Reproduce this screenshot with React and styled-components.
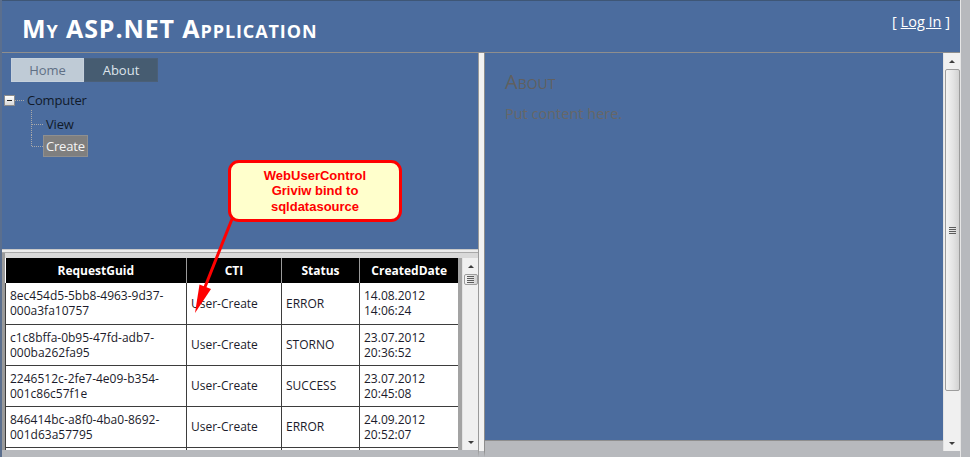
import styled, { createGlobalStyle } from "styled-components";

const GlobalStyle = createGlobalStyle`
  html, body {
    margin: 0;
    padding: 0;
    background: #b7b9bd;
  }
  body {
    font-family: "Open Sans", "DejaVu Sans", sans-serif;
  }
  * {
    box-sizing: border-box;
  }
`;

const Frame = styled.div`
  position: relative;
  width: 970px;
  height: 457px;
  display: flex;
  background: #b7b9bd;
  overflow: hidden;
`;

const Page = styled.div`
  width: 961px;
  height: 100%;
  display: flex;
  flex-direction: column;
  border-left: 2px solid #5b6f8e;
  border-right: 1px solid #e6e6e6;
  background: #b7b9bd;
`;

const Header = styled.header`
  height: 52px;
  flex-shrink: 0;
  display: flex;
  justify-content: space-between;
  align-items: flex-start;
  background: #4b6c9e;
  border-top: 1px solid #3e5676;
  padding: 0 10px 0 20px;
`;

const Title = styled.h1`
  margin: 10px 0 0;
  font-size: 25px;
  font-weight: 700;
  font-variant: small-caps;
  letter-spacing: 0.9px;
  color: #ffffff;
`;

const Login = styled.div`
  margin-top: 11px;
  font-size: 14.5px;
  color: #ffffff;

  a {
    color: #ffffff;
    text-decoration: underline;
  }
`;

const Body = styled.div`
  flex: 1;
  display: flex;
  border-top: 1px solid #8e8e8e;
  min-height: 0;
`;

const LeftPane = styled.div`
  position: relative;
  width: 476px;
  display: flex;
  flex-direction: column;
`;

const NavArea = styled.div`
  height: 196px;
  background: #4b6c9e;
  padding: 5px 0 0 9px;
`;

const Menu = styled.ul`
  list-style: none;
  display: flex;
  margin: 0;
  padding: 0;
`;

const MenuItem = styled.li`
  width: ${(p) => (p.$active ? "73px" : "74px")};
  height: 24px;
  display: flex;
  align-items: center;
  justify-content: center;
  font-size: 13px;
  background: ${(p) => (p.$active ? "#bfcbd6" : "#465c71")};
  color: ${(p) => (p.$active ? "#5f7085" : "#dde4ec")};
  border: 1px solid ${(p) => (p.$active ? "#c6d1dc" : "#4b5f77")};
`;

const Tree = styled.div`
  margin: 7px 0 0 -7px;
  font-size: 13px;
  letter-spacing: -0.2px;
  color: #111a2a;
`;

const TreeRow = styled.div`
  position: relative;
  height: 22px;
  display: flex;
  align-items: center;
`;

const Expander = styled.span`
  position: relative;
  width: 11px;
  height: 11px;
  border: 1px solid #8c8c8c;
  background: linear-gradient(#ffffff, #d9d9d9);

  &::before {
    content: "";
    position: absolute;
    left: 2px;
    top: 4px;
    width: 5px;
    height: 1px;
    background: #222;
  }
`;

const Connector = styled.span`
  width: ${(p) => p.$w}px;
  border-top: 1px dotted #a9a9a9;
`;

const Children = styled.div`
  margin: 2px 0 0 27px;
`;

const ChildRow = styled(TreeRow)`
  padding-left: 12px;

  &::before {
    content: "";
    position: absolute;
    left: 0;
    top: ${(p) => (p.$first ? "-3px" : "0")};
    height: ${(p) => (p.$last ? "11px" : "calc(100% + 3px)")};
    border-left: 1px dotted #a9a9a9;
  }

  &::after {
    content: "";
    position: absolute;
    left: 1px;
    top: 11px;
    width: 11px;
    border-top: 1px dotted #a9a9a9;
  }
`;

const NodeLabel = styled.span`
  height: 22px;
  display: flex;
  align-items: center;
  padding: 0 2px;
  border: 1px solid ${(p) => (p.$selected ? "#8f8f8f" : "transparent")};
  background: ${(p) => (p.$selected ? "#7f7f7f" : "transparent")};
  color: ${(p) => (p.$selected ? "#f4f4f4" : "#111a2a")};
`;

const HSplit = styled.div`
  height: 4px;
  background: #ececec;
  border-top: 1px solid #c9c9c9;
  border-bottom: 1px solid #a9a9a9;
`;

const GridArea = styled.div`
  height: 197px;
  display: flex;
  background: #d9d9d9;
  padding-top: 5px;
  border-left: 3px solid #9a9a9a;
`;

const GridClip = styled.div`
  width: 453px;
  height: 192px;
  overflow: hidden;
  background: #ffffff;
`;

const Grid = styled.table`
  width: 453px;
  border-collapse: collapse;
  table-layout: fixed;
  font-size: 12px;
`;

const HeadCell = styled.th`
  height: 25px;
  background: #000000;
  color: #ffffff;
  font-weight: 700;
  text-align: center;
  border-left: 1px solid #9a9a9a;
  padding: 0;

  &:first-child {
    border-left: none;
  }
`;

const Cell = styled.td`
  height: 41px;
  padding: 0 4px;
  line-height: 15px;
  color: #1b1b2b;
  border: 1px solid #3d3d3d;
  border-top: none;
  vertical-align: middle;
`;

const Gap = styled.div`
  width: 4px;
  background: #a3a3a3;
`;

const ScrollBar = styled.div`
  width: ${(p) => p.$w || 16}px;
  height: ${(p) => p.$h}px;
  display: flex;
  flex-direction: column;
  align-items: center;
  background: #f0f0f0;
  border-left: 1px solid #e3e3e3;
`;

const Arrow = styled.div`
  height: 16px;
  width: 100%;
  display: flex;
  align-items: center;
  justify-content: center;

  &::before {
    content: "";
    border-left: 3px solid transparent;
    border-right: 3px solid transparent;
    ${(p) =>
      p.$down
        ? "border-top: 3px solid #3c3c3c;"
        : "border-bottom: 3px solid #3c3c3c;"}
  }
`;

const Thumb = styled.div`
  width: ${(p) => p.$w || 14}px;
  height: ${(p) => p.$h}px;
  display: flex;
  align-items: center;
  justify-content: center;
  border: 1px solid #9c9c9c;
  border-radius: 2px;
  background: linear-gradient(90deg, #f4f4f4, #e2e2e2 60%, #d2d2d2);
`;

const Grip = styled.div`
  width: 7px;
  height: 7px;
  background: repeating-linear-gradient(
    #5c5c5c 0,
    #5c5c5c 1px,
    transparent 1px,
    transparent 2px
  );
`;

const Track = styled.div`
  flex: 1;
`;

const VSplit = styled.div`
  width: 7px;
  background: #f2f2f2;
  border-left: 1px solid #9a9a9a;
  border-right: 1px solid #8d8d8d;
  border-bottom: 6px solid #b7b9bd;
`;

const RightPane = styled.div`
  flex: 1;
  display: flex;
  align-items: flex-start;
`;

const Content = styled.div`
  flex: 1;
  height: 388px;
  background: #4b6c9e;
  padding: 15px 20px;
  color: #636363;
  border-bottom: 1px solid #8e8e8e;
`;

const Heading = styled.h2`
  margin: 0;
  font-size: 20px;
  font-weight: 400;
  font-variant: small-caps;
  color: #606060;
`;

const Para = styled.p`
  margin: 9px 0 0;
  font-size: 14.5px;
  color: #676767;
`;

const Callout = styled.div`
  position: absolute;
  left: 226px;
  top: 107px;
  width: 174px;
  height: 62px;
  display: flex;
  align-items: center;
  justify-content: center;
  text-align: center;
  background: #ffffcc;
  border: 3px solid #ff0000;
  border-radius: 11px;
  font-family: "Liberation Sans", Arial, sans-serif;
  font-size: 13px;
  font-weight: 700;
  line-height: 15.5px;
  color: #ff0000;
`;

const Pointer = styled.svg`
  position: absolute;
  left: 0;
  top: 0;
  pointer-events: none;
`;

const rows = [
  ["8ec454d5-5bb8-4963-9d37-000a3fa10757", "User-Create", "ERROR", "14.08.2012", "14:06:24"],
  ["c1c8bffa-0b95-47fd-adb7-000ba262fa95", "User-Create", "STORNO", "23.07.2012", "20:36:52"],
  ["2246512c-2fe7-4e09-b354-001c86c57f1e", "User-Create", "SUCCESS", "23.07.2012", "20:45:08"],
  ["846414bc-a8f0-4ba0-8692-001d63a57795", "User-Create", "ERROR", "24.09.2012", "20:52:07"],
  ["95ab31c0-4e17-4c2d-9f3a-002a7c1b4e60", "User-Create", "ERROR", "25.09.2012", "08:14:31"],
];

const splitGuid = (g) => {
  const cut = g.lastIndexOf("-") + 1;
  return [g.slice(0, cut), g.slice(cut)];
};

const App = () => {
  return (
    <>
      <GlobalStyle />
      <Frame>
        <Page>
          <Header>
            <Title>My ASP.NET Application</Title>
            <Login>
              [ <a href="#">Log In</a> ]
            </Login>
          </Header>

          <Body>
            <LeftPane>
              <NavArea>
                <Menu>
                  <MenuItem $active>Home</MenuItem>
                  <MenuItem>About</MenuItem>
                </Menu>

                <Tree>
                  <TreeRow>
                    <Expander />
                    <Connector $w={9} />
                    <NodeLabel>Computer</NodeLabel>
                  </TreeRow>
                  <Children>
                    <ChildRow $first>
                      <NodeLabel>View</NodeLabel>
                    </ChildRow>
                    <ChildRow $last>
                      <NodeLabel $selected>Create</NodeLabel>
                    </ChildRow>
                  </Children>
                </Tree>
              </NavArea>

              <HSplit />

              <GridArea>
                <GridClip>
                  <Grid>
                    <colgroup>
                      <col style={{ width: 181 }} />
                      <col style={{ width: 95 }} />
                      <col style={{ width: 78 }} />
                      <col style={{ width: 99 }} />
                    </colgroup>
                    <thead>
                      <tr>
                        <HeadCell>RequestGuid</HeadCell>
                        <HeadCell>CTI</HeadCell>
                        <HeadCell>Status</HeadCell>
                        <HeadCell>CreatedDate</HeadCell>
                      </tr>
                    </thead>
                    <tbody>
                      {rows.map(([guid, cti, status, date, time]) => {
                        const [a, b] = splitGuid(guid);
                        return (
                          <tr key={guid}>
                            <Cell>
                              {a}
                              <br />
                              {b}
                            </Cell>
                            <Cell>{cti}</Cell>
                            <Cell>{status}</Cell>
                            <Cell>
                              {date}
                              <br />
                              {time}
                            </Cell>
                          </tr>
                        );
                      })}
                    </tbody>
                  </Grid>
                </GridClip>
                <Gap />
                <ScrollBar $h={192} $w={16}>
                  <Arrow />
                  <Thumb $h={11}>
                    <Grip />
                  </Thumb>
                  <Track />
                  <Arrow $down />
                </ScrollBar>
              </GridArea>

              <Callout>
                WebUserControl
                <br />
                Griviw bind to
                <br />
                sqldatasource
              </Callout>
            </LeftPane>

            <VSplit />

            <RightPane>
              <Content>
                <Heading>About</Heading>
                <Para>Put content here.</Para>
              </Content>
              <ScrollBar $h={398} $w={17}>
                <Arrow />
                <Thumb $h={322} $w={15}>
                  <Grip />
                </Thumb>
                <Track />
                <Arrow $down />
              </ScrollBar>
            </RightPane>
          </Body>
        </Page>

        <Pointer width="970" height="457" viewBox="0 0 970 457">
          <line x1="232" y1="219" x2="203" y2="292" stroke="#ff0000" strokeWidth="3" />
          <polygon points="195,313 211,289 199.5,284.5" fill="#ff0000" />
        </Pointer>
      </Frame>
    </>
  );
};

export default App;
